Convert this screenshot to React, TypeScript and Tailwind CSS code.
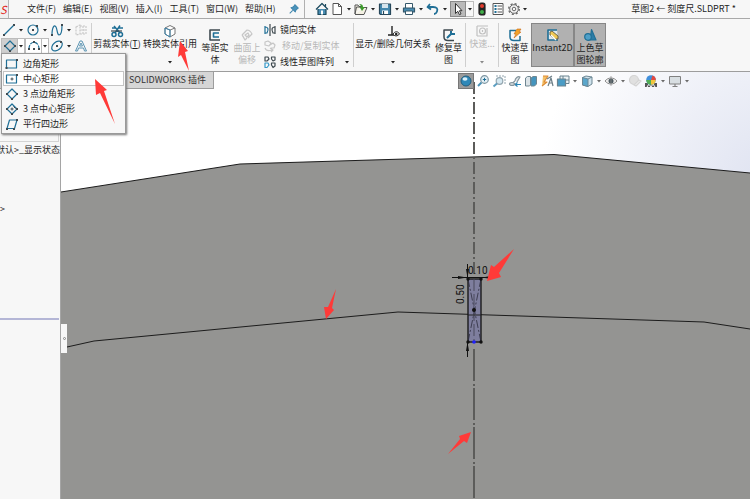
import type { ReactNode } from 'react';
import clsx from 'clsx';

const BLUE = '#1f6f96';
const INK = '#3f4a50';

interface IconProps {
  size?: string;
  box?: string;
  color?: string;
  children: ReactNode;
}

const Icon = ({ size = 'w-[14px] h-[14px]', box = '0 0 14 14', color = BLUE, children }: IconProps) => (
  <svg
    className={clsx('shrink-0', size)}
    viewBox={box}
    fill="none"
    stroke={color}
    strokeWidth="1.2"
    strokeLinejoin="round"
    aria-hidden="true"
  >
    {children}
  </svg>
);

const CaretMark = ({ color = '#222' }: { color?: string }) => (
  <svg className="w-1 h-[3px] shrink-0" viewBox="0 0 4 3" aria-hidden="true">
    <path d="M0 0h4L2 2.6z" fill={color} />
  </svg>
);

const Caret = ({ label, className = 'w-[10px]', color }: { label: string; className?: string; color?: string }) => (
  <button aria-label={label} className={clsx('flex h-full items-center justify-center', className)}>
    <CaretMark color={color} />
  </button>
);

/* ---------- sketch tool icons ---------- */

const dot = (x: number, y: number) => <rect x={x - 1} y={y - 1} width="2" height="2" fill={INK} stroke="none" />;

const LineIcon = () => (
  <Icon>
    <path d="M2 12L12 2" />
    {dot(2, 12)}
    {dot(12, 2)}
  </Icon>
);

const CircleIcon = () => (
  <Icon>
    <circle cx="7" cy="7" r="5" />
    {dot(7, 7)}
    {dot(11, 3)}
  </Icon>
);

const SplineIcon = () => (
  <Icon>
    <path d="M2 12C2 4 4.500 1 6 4s1 8 3 8 3-5 3-10" />
    {dot(2, 12)}
    {dot(12, 2)}
  </Icon>
);

const PlaneIcon = () => (
  <Icon color="#c9c9c9">
    <path d="M2 4l4-2v9l-4 1zM6 3h6v8H6M9 3v8M6 7h6" strokeDasharray="2 1" />
  </Icon>
);

const DiamondIcon = ({ center = false }: { center?: boolean }) => (
  <Icon>
    <path d="M7 2l5 5-5 5-5-5z" />
    {dot(2, 7)}
    {dot(7, 12)}
    {dot(12, 7)}
    {center && <path d="M7 5.500v3M5.500 7h3M8.500 4.500l2 2" stroke={INK} strokeWidth="1" />}
  </Icon>
);

const ArcIcon = () => (
  <Icon>
    <path d="M2 10C2 1 12 1 12 10" strokeDasharray="4 1" />
    {dot(2, 10)}
    {dot(12, 10)}
    {dot(7, 10)}
    {dot(7, 3)}
  </Icon>
);

const EllipseIcon = () => (
  <Icon>
    <ellipse cx="7" cy="7" rx="6" ry="4" transform="rotate(-40 7 7)" />
    {dot(7, 7)}
    {dot(11, 3)}
  </Icon>
);

const TextIcon = () => (
  <Icon color="#5c95b3">
    <path d="M1.500 12L6 2h2l4.500 10h-2L9.500 9h-5l-1 3zM5.500 7h3L7 4z" strokeWidth="1" />
  </Icon>
);

const CornerRectIcon = ({ center = false }: { center?: boolean }) => (
  <Icon>
    <rect x="1.500" y="3" width="10" height="8" />
    {!center && dot(1.5, 11)}
    {dot(12, 3)}
    {center && <path d="M7 5.500v3M5.500 7h3" stroke={INK} strokeWidth="1" />}
  </Icon>
);

const ParallelogramIcon = () => (
  <Icon>
    <path d="M4.500 3H12L9.500 11.500H2z" />
    {dot(12, 3)}
    {dot(2, 12)}
    {dot(9, 12)}
  </Icon>
);

/* ---------- title bar ---------- */

const menus = ['文件(F)', '编辑(E)', '视图(V)', '插入(I)', '工具(T)', '窗口(W)', '帮助(H)'];

const quickTools: { label: string; icon: ReactNode }[] = [
  {
    label: '新建',
    icon: (
      <Icon color="#555">
        <path d="M3 1.500h5.500l3 3v8H3z" fill="#fff" strokeWidth="1" />
        <path d="M8.500 1.500v3h3" strokeWidth="1" />
      </Icon>
    ),
  },
  {
    label: '打开',
    icon: (
      <Icon color="#555">
        <path d="M1 12V3h3l1 1.500h2M1 12l1.500-7H6M1 12.500h9l3-7h-3" fill="#f4f1e4" strokeWidth="1" />
        <path d="M5 2c3 0 4 1 4 3h2L8 9 5.500 5H7C7 4 6.500 3 5 2z" fill="#3c9a2b" stroke="none" />
      </Icon>
    ),
  },
  {
    label: '保存',
    icon: (
      <Icon color="#26475a">
        <path d="M1.500 2h11v10.500h-10l-1-1z" fill="#4688ad" />
        <path d="M4 2h6v4H4z" fill="#d7e5ed" stroke="none" />
        <path d="M4 8.500h6V12H4z" fill="#fff" stroke="none" />
        <path d="M5.500 9v3" />
      </Icon>
    ),
  },
  {
    label: '打印',
    icon: (
      <Icon color="#35586b">
        <path d="M3.500 6V1.500h7V6" fill="#fff" strokeWidth="1" />
        <rect x="1.500" y="6" width="11" height="4" fill="#4a8db2" />
        <path d="M3.500 9h7v3.500h-7z" fill="#fff" strokeWidth="1" />
      </Icon>
    ),
  },
  {
    label: '撤销',
    icon: (
      <Icon>
        <path d="M4 2L1.500 5 5 7.500M2 5h5c4 0 5 2 4 4.500S9 12 8 12" strokeWidth="1.800" />
      </Icon>
    ),
  },
];

const TitleBar = () => (
  <header className="flex h-[19px] items-center border-b border-[#a9a9a9] bg-[#f7f7f7]">
    <div className="flex h-full w-[9px] items-center border-r border-[#b5b5b5] bg-[#efefef] text-[11px] italic text-[#e2231a]">
      S
    </div>
    <nav className="flex h-full w-[295px] items-center pl-[18px] leading-3">
      {menus.map((m) => (
        <button key={m} className="mr-[7px] whitespace-nowrap">
          {m}
        </button>
      ))}
      <button aria-label="固定菜单" className="ml-auto mr-1">
        <Icon size="w-3 h-3">
          <path d="M8 2l4 4-1 .5-2 2-.5 2L3.500 5.500l2-.5 2-2zM5.500 8.500L2 12" fill="#4b93bb" stroke="#3f86ad" />
        </Icon>
      </button>
    </nav>
    <div className="flex h-full items-center border-l border-[#b0b0b0] pl-2">
      <button aria-label="主页" className="flex w-[17px] justify-center">
        <Icon color="#1c4a5f">
          <path d="M3 7v5.500h8V7" fill="#4a8db2" />
          <path d="M1 7.500l6-6 6 6M10.500 2v2.500" />
          <path d="M6 8.500h2v4H6z" fill="#fff" stroke="none" />
        </Icon>
      </button>
      {quickTools.map((t) => (
        <div key={t.label} className="flex h-full items-center">
          <button aria-label={t.label}>{t.icon}</button>
          <Caret label={`${t.label}选项`} />
        </div>
      ))}
      <button aria-label="选择" className="flex h-4 w-4 items-center justify-center border border-[#8a8a8a] bg-[#b9b9b9]">
        <Icon color="#333">
          <path d="M4.500 1.500v10l2.300-2.200 1.600 3.400 1.600-.8-1.600-3.200H11z" fill="#fff" strokeWidth="1" />
        </Icon>
      </button>
      <span className="flex h-4 w-2 border border-l-0 border-[#bdbdbd]">
        <Caret label="选择选项" className="w-full" />
      </span>
      <button aria-label="重建模型" className="flex w-4 justify-center">
        <Icon>
          <rect x="4" y="1" width="6" height="12" rx="2" fill="#222" stroke="#222" />
          <circle cx="7" cy="4" r="2" fill="#e23b2e" stroke="none" />
          <circle cx="7" cy="10" r="2" fill="#3fae49" stroke="none" />
        </Icon>
      </button>
      <button aria-label="文件属性" className="flex w-4 justify-center">
        <Icon color="#555">
          <rect x="2" y="1.500" width="10" height="11" fill="#fff" strokeWidth="1" />
          <path d="M6.500 4H11M6.500 7H11M6.500 10H11" strokeWidth="1" />
          <path d="M3.500 4h2M3.500 7h2M3.500 10h2" stroke={BLUE} strokeWidth="2" />
        </Icon>
      </button>
      <button aria-label="选项" className="flex w-4 justify-center">
        <Icon color="#666">
          <circle cx="7" cy="7" r="4.300" strokeWidth="1" />
          <circle cx="7" cy="7" r="5.300" strokeWidth="1.300" strokeDasharray="2.100 2.060" />
          <circle cx="7" cy="7" r="1.800" strokeWidth="1" />
        </Icon>
      </button>
      <Caret label="更多选项" className="w-[6px]" />
    </div>
    <h1 className="ml-auto whitespace-nowrap pr-[14px] leading-3">草图2 ← 刻度尺.SLDPRT *</h1>
  </header>
);

/* ---------- ribbon ---------- */

interface RibbonButtonProps {
  label: string;
  width: string;
  icon: ReactNode;
  lines?: ReactNode[];
  caret?: boolean;
  disabled?: boolean;
  active?: boolean;
}

const RibbonButton = ({ label, width, icon, lines, caret, disabled, active }: RibbonButtonProps) => {
  const low = !!lines && !caret;
  return (
    <button
      aria-label={label}
      disabled={disabled}
      className={clsx(
        'flex flex-col items-center whitespace-nowrap leading-3',
        width,
        active ? 'my-1 border border-[#878787] bg-[#b1b1b1] pt-1' : low ? 'pt-[9px]' : 'pt-[5px]',
        disabled && 'text-[#b8b8b8]'
      )}
    >
      {icon}
      {(lines ?? [label]).map((l, i) => (
        <span key={i}>{l}</span>
      ))}
      {caret && (
        <span className="mt-[11px]">
          <CaretMark color={disabled ? '#888' : '#222'} />
        </span>
      )}
    </button>
  );
};

const Divider = () => <div className="my-1 w-px bg-[#cfcfcf]" />;

const ToolPair = ({ label, boxed, children }: { label: string; boxed?: 'on' | 'open'; children: ReactNode }) => (
  <div
    className={clsx(
      'flex h-4 w-6 items-center',
      boxed && 'border border-[#bcbcbc] bg-white'
    )}
  >
    <button
      aria-label={label}
      className={clsx('flex h-full w-4 items-center justify-center', boxed === 'on' && 'bg-[#cfcfcf]', boxed && 'border-r border-[#bcbcbc]')}
    >
      {children}
    </button>
    <Caret label={`${label}选项`} className={boxed ? 'w-[6px]' : 'w-2'} />
  </div>
);

const Ribbon = () => (
  <section aria-label="草图" className="flex h-[53px] border-b border-[#9d9d9d] bg-[#f7f7f7]">
    <div className="flex w-[91px] flex-col pl-px pt-[3px]">
      <div className="flex">
        <ToolPair label="直线"><LineIcon /></ToolPair>
        <ToolPair label="圆"><CircleIcon /></ToolPair>
        <ToolPair label="样条曲线"><SplineIcon /></ToolPair>
        <button aria-label="基准面" disabled className="flex w-4 items-center justify-center"><PlaneIcon /></button>
      </div>
      <div className="flex">
        <ToolPair label="矩形" boxed="on"><DiamondIcon /></ToolPair>
        <ToolPair label="圆弧" boxed="open"><ArcIcon /></ToolPair>
        <ToolPair label="椭圆"><EllipseIcon /></ToolPair>
        <button aria-label="文字" className="flex w-4 items-center justify-center"><TextIcon /></button>
      </div>
    </div>
    <Divider />
    <RibbonButton
      label="剪裁实体(T)"
      lines={[<>剪裁实体(<u>T</u>)</>]}
      width="w-[50px] -mt-1"
      icon={
        <Icon>
          <path d="M2 4h3M9 4h4M4 2l6 7M10 1.500L5 9" strokeWidth="1.500" />
          <circle cx="4" cy="10.500" r="2" strokeWidth="1.500" />
          <circle cx="10.500" cy="10.500" r="2" strokeWidth="1.500" />
          <path d="M1 7h11" stroke={INK} />
        </Icon>
      }
    />
    <RibbonButton
      label="转换实体引用"
      width="w-[56px]"
      caret
      icon={
        <Icon color="#777">
          <path d="M2 4l5-2.500L12 4v6l-5 3-5-3z" fill="#fff" strokeWidth="1" />
          <path d="M2 4l5 2 5-2M7 6v7" strokeWidth="1" />
          <path d="M2 4l5 2v7l-5-3z" stroke="#3f86ad" strokeWidth="1" />
        </Icon>
      }
    />
    <RibbonButton
      label="等距实体"
      lines={['等距实', '体']}
      width="w-[34px]"
      icon={
        <Icon>
          <path d="M12 2H2v10h10" stroke={INK} strokeWidth="1.600" />
          <path d="M11 5H5.500v4H11" strokeWidth="1.600" />
        </Icon>
      }
    />
    <RibbonButton
      label="曲面上偏移"
      lines={['曲面上', '偏移']}
      width="w-[30px]"
      disabled
      icon={
        <Icon color="#c6c6c6">
          <path d="M2 7l5-5c2 0 4 2 5 4l-4 4M2 7c1 1 2 3 3 5l2-2M5 7l3-2 1 2-2 2z" />
        </Icon>
      }
    />
    <div className="flex w-[91px] flex-col pl-px pt-[3px]">
      <button className="flex h-4 items-center gap-[3px] whitespace-nowrap">
        <Icon>
          <path d="M2 3v8M2 4c3 0 4 2 2 6H2" />
          <path d="M7 1v12M12 3v8M12 4c-3 0-4 2-2 6h2" stroke={INK} />
        </Icon>
        镜向实体
      </button>
      <button disabled className="flex h-4 items-center gap-[3px] whitespace-nowrap text-[#b8b8b8]">
        <Icon color="#c6c6c6">
          <path d="M2 3l3-1 3 2-2 3-4-1zM7 6l3-2 2 2-1 3H8M2 9c1 3 4 3 7 2M7 9l3 2-2 2" />
        </Icon>
        <span className="pl-[2px]">移动/复制实体</span>
      </button>
      <div className="flex h-4 items-center">
        <button className="flex items-center gap-[3px] whitespace-nowrap">
          <Icon color={INK}>
            <path d="M2 2h3l1 2-2 2H2zM8.500 2H12v3l-2 1-1.500-2zM8.500 8H12v3l-2 1.500L8.500 10z" />
            <path d="M2 8h3l1 2-2 2.500H2z" stroke="#3498c8" />
          </Icon>
          线性草图阵列
        </button>
        <Caret label="阵列选项" className="ml-auto w-3" />
      </div>
    </div>
    <Divider />
    <RibbonButton
      label="显示/删除几何关系"
      width="w-[78px]"
      caret
      icon={
        <Icon color="#222">
          <path d="M6 2v9M2 11h8" strokeWidth="1.400" />
          <path d="M7 10c2-3 5-3 6.500 0-2 2.500-5 2.500-6.500 0z" fill="#fff" strokeWidth="1" />
          <circle cx="10.200" cy="10" r="1.300" fill="#222" stroke="none" />
        </Icon>
      }
    />
    <RibbonButton
      label="修复草图"
      lines={['修复草', '图']}
      width="w-[33px]"
      icon={
        <Icon color={INK}>
          <path d="M11 2H2v7c0 2 1 3.500 4 3.500h6" strokeWidth="1.500" />
          <path d="M5 10l4.500-4.500M9 3v3h4" stroke={BLUE} strokeWidth="2" />
        </Icon>
      }
    />
    <Divider />
    <RibbonButton
      label="快速..."
      width="w-8"
      caret
      disabled
      icon={
        <Icon color="#c0c0c0">
          <path d="M2 2h11M2 2v10M2 12h10V4" />
          <circle cx="7.500" cy="7" r="3" />
          <path d="M7.500 6v2" />
        </Icon>
      }
    />
    <Divider />
    <RibbonButton
      label="快速草图"
      lines={['快速草', '图']}
      width="w-8"
      icon={
        <Icon>
          <path d="M8 2.500H2V9c0 2 1 3.500 4 3.500h6V8" strokeWidth="1.500" />
          <path d="M9 1h4l-2 3h2L6 10l2-4H6z" fill="#f3a32a" stroke="#c76a17" strokeWidth=".6" />
        </Icon>
      }
    />
    <RibbonButton
      label="Instant2D"
      lines={['Instant2D']}
      width="w-[43px]"
      active
      icon={
        <Icon>
          <path d="M11 2H2v10h10" fill="#dfe9ee" strokeWidth="1.600" />
          <path d="M4 4l2-1 6 5v3H9L4 7z" fill="#f0c955" stroke="#514a33" strokeWidth=".8" />
          <path d="M5 7l5 5" stroke="#fff" />
        </Icon>
      }
    />
    <RibbonButton
      label="上色草图轮廓"
      lines={['上色草', '图轮廓']}
      width="w-8"
      active
      icon={
        <Icon>
          <path d="M8.500 1.500L13 12H7z" fill="#2c7ca6" />
          <circle cx="5" cy="9" r="3.300" fill="#4f9fc7" />
        </Icon>
      }
    />
  </section>
);

/* ---------- rectangle flyout ---------- */

const rectangleTools = [
  { label: '边角矩形', icon: <CornerRectIcon /> },
  { label: '中心矩形', icon: <CornerRectIcon center />, hover: true },
  { label: '3 点边角矩形', icon: <DiamondIcon /> },
  { label: '3 点中心矩形', icon: <DiamondIcon center /> },
  { label: '平行四边形', icon: <ParallelogramIcon /> },
];

const RectangleFlyout = () => (
  <ul className="absolute left-px top-[53px] z-10 w-[125px] border border-[#999] bg-[#f7f7f7] px-px py-[2px] shadow-[1px_1px_2px_#777]">
    {rectangleTools.map((t) => (
      <li key={t.label}>
        <button
          className={clsx(
            'flex h-[15px] w-full items-center gap-1 border pl-px leading-3',
            t.hover ? 'border-[#c4c4c4] bg-white' : 'border-transparent'
          )}
        >
          {t.icon}
          {t.label}
        </button>
      </li>
    ))}
  </ul>
);

/* ---------- heads-up view toolbar ---------- */

const viewTools: { label: string; icon: ReactNode; caret?: boolean }[] = [
  {
    label: '整屏显示全图',
    icon: (
      <Icon color="#7f96a1">
        <circle cx="8.500" cy="5.500" r="3.800" fill="#e4f0f6" />
        <path d="M5.500 8.500L2 12" stroke="#4a90b5" strokeWidth="2" />
        <path d="M8.500 3.800v3.400M6.800 5.500h3.400" stroke={BLUE} strokeWidth="1" />
      </Icon>
    ),
  },
  {
    label: '局部放大',
    icon: (
      <Icon color="#94a6af">
        <circle cx="7.500" cy="7" r="3.300" fill="#d5e8f1" />
        <path d="M5 9.500l-3.500 3" stroke="#5a9dc0" strokeWidth="2" />
        <path d="M4 2h9v9" strokeDasharray="2 1" strokeWidth="1" />
      </Icon>
    ),
  },
  {
    label: '上一视图',
    icon: (
      <Icon color="#84949c">
        <path d="M2 11l5-4M7 7c0-3 3-5 5-4L9 8" fill="#e0e5e8" />
        <path d="M13 10.500H8M9.500 8.500l-2.500 2 2.500 2" stroke="#2a84b4" />
        <ellipse cx="4" cy="10" rx="2.500" ry="1.500" fill="#ccd3d7" />
      </Icon>
    ),
  },
  {
    label: '剖面视图',
    icon: (
      <Icon color="#6f8691">
        <path d="M1.500 4l2-1.500h3V11l-1 1h-4z" fill="#dce4e8" strokeWidth="1" />
        <path d="M7 4l2-1.500h3.500V10l-2 2H7z" fill="#4595be" strokeWidth="1" />
      </Icon>
    ),
  },
  {
    label: '动态注解视图',
    icon: (
      <Icon color="#6d7f88">
        <path d="M3 2h5L4 8h3l-5 4" fill="#f3c067" stroke="#dd8c36" />
        <path d="M8 12l3-8 2 8M9 9h3M7 5l5-3" />
      </Icon>
    ),
  },
  {
    label: '视图定向',
    caret: true,
    icon: (
      <Icon color="#6b8490">
        <path d="M4 5V2h9v7.500h-3.500z" fill="#edf2f4" strokeWidth="1" />
        <path d="M1.500 5h8v7h-8z" fill="#4a9cc5" />
        <path d="M7 2v3M9.500 6H13" strokeWidth="1" />
      </Icon>
    ),
  },
  {
    label: '显示样式',
    caret: true,
    icon: (
      <Icon color="#6d8794">
        <path d="M2.500 3.500L6 2l6 1v7l-4 2.500-5.500-1.500z" fill="#cfe2ec" strokeWidth="1" />
        <path d="M2.500 3.500L8 5v7.500l-5.500-1.500z" fill="#5aa6cb" strokeWidth="1" />
        <path d="M8 5l4-2" strokeWidth="1" />
      </Icon>
    ),
  },
  {
    label: '隐藏/显示项目',
    caret: true,
    icon: (
      <Icon color="#8e8e8e">
        <path d="M1 7c3-4 9-4 12 0-3 4-9 4-12 0z" fill="#ececec" strokeWidth="1" />
        <circle cx="7" cy="7" r="2.500" fill="#4c5960" stroke="none" />
        <path d="M7 2v10" strokeWidth=".7" />
      </Icon>
    ),
  },
  {
    label: '编辑外观',
    icon: (
      <Icon color="#d4d4d4">
        <circle cx="6" cy="6" r="4.500" fill="#e0e0e0" />
        <path d="M8 12l5-5-2-1-5 5z" fill="#eee" />
      </Icon>
    ),
  },
  {
    label: '应用布景',
    caret: true,
    icon: (
      <Icon>
        <path d="M1 9h12v4H1z" fill="#555" stroke="none" />
        <path d="M3 13l2-3 2 3 2-3 2 3" stroke="#fff" strokeWidth="1" />
        <circle cx="7" cy="6" r="4.800" fill="#3f8fdc" stroke="none" />
        <path d="M7 6l1.500-4.600A4.800 4.800 0 0 1 11.800 6z" fill="#e7483c" stroke="none" />
        <path d="M7 6h4.800A4.800 4.800 0 0 1 7 10.800z" fill="#f2c53d" stroke="none" />
        <path d="M7 6v4.800A4.800 4.800 0 0 1 2.200 6z" fill="#52ae55" stroke="none" />
      </Icon>
    ),
  },
  {
    label: '视图设定',
    caret: true,
    icon: (
      <Icon color="#808080">
        <rect x="1.500" y="2.500" width="11" height="7.500" fill="#d8dee2" strokeWidth="1" />
        <path d="M7 10v2M4.500 12.500h5" />
      </Icon>
    ),
  },
];

const ViewToolbar = () => (
  <div className="absolute right-[59px] top-px flex h-4 items-center">
    <button aria-label="查看" className="mr-px flex h-4 w-4 items-center justify-center border border-[#777] bg-[#9b9b9b]">
      <Icon>
        <circle cx="7" cy="7" r="5" fill="#2f88b8" stroke="#225e7e" strokeWidth="1" />
        <ellipse cx="6" cy="5" rx="2.500" ry="1.800" fill="#d8eff9" stroke="none" />
      </Icon>
    </button>
    {viewTools.map((t) => (
      <div key={t.label} className="flex h-full items-center">
        <button aria-label={t.label} className="flex w-4 justify-center">
          {t.icon}
        </button>
        {t.caret && <Caret label={`${t.label}选项`} className="w-2" color="#6a6a6a" />}
      </div>
    ))}
  </div>
);

/* ---------- model view ---------- */

const ModelView = () => (
  <svg className="block w-full" viewBox="61 72 689 427" role="img" aria-label="模型视图">
    <defs>
      <radialGradient id="sky" gradientUnits="userSpaceOnUse" cx="780" cy="190" r="240">
        <stop offset="0" stopColor="#dde1f0" />
        <stop offset="1" stopColor="#ffffff" />
      </radialGradient>
    </defs>
    <rect x="61" y="72" width="689" height="427" fill="url(#sky)" />
    <path d="M61 192L240 164 554 154.500 750 173V499H61z" fill="#949492" />
    <g fill="none" stroke="#1c1c1c" strokeWidth="1">
      <path d="M61 192L240 164 554 154.500 750 173" />
      <path d="M67 347L94 341 398 312 704 322 750 329" />
    </g>
    <path d="M474 82V278" stroke="#5c5c5a" strokeWidth="2" strokeDasharray="12 3 2 3" />
    <path d="M474 349V499" stroke="#5c5c5a" strokeWidth="2" strokeDasharray="32 3 2 2" />

    {/* sketch rectangle with its construction diagonals */}
    <rect x="468" y="279" width="13" height="63" fill="#7e7e9e" stroke="#111" strokeWidth="1.300" />
    <path d="M468 279L481 342M481 279L468 342" stroke="#2c2c3c" strokeWidth=".8" strokeDasharray="8 2 2 2" />
    <path d="M474 279V342" stroke="#4a4a5c" strokeWidth="1" strokeDasharray="12 3" />
    <path d="M468 315h13" stroke="#222" strokeWidth="1" />
    <g fill="#111">
      <circle cx="468" cy="279" r="1.700" />
      <circle cx="481" cy="279" r="1.700" />
      <circle cx="468" cy="342" r="1.700" />
      <circle cx="481" cy="342" r="1.700" />
      <circle cx="474" cy="310" r="2" />
    </g>
    <circle cx="474" cy="342" r="1.800" fill="#2020ff" />

    {/* dimensions */}
    <path d="M452 277.500H497M467.500 264V278M467.500 342V357" stroke="#111" strokeWidth="1" />
    <path d="M467 277.500l-9-1.500v3zM482 277.500l9-1.500v3zM467.500 278l-1.500-9h3zM467.500 342l-1.500 9h3z" fill="#111" />
    <text x="468" y="274" className="text-[10px]" fontFamily="Roboto, sans-serif" fill="#111">
      0.10
    </text>
    <text transform="translate(464 304) rotate(-90)" className="text-[10px]" fontFamily="Roboto, sans-serif" fill="#111">
      0.50
    </text>

    {/* callout arrows */}
    <g fill="#ff3a38">
      <path d="M514 249L499 273 501 277 487 281 491 265 494 267z" />
      <path d="M336 289L332 308 334 310 326 319 324 307 328 307z" />
      <path d="M448 454L460 439 459 436 471 432 467 443 464 441z" />
    </g>
  </svg>
);

const FeaturePanel = () => (
  <aside className="flex w-[61px] shrink-0 flex-col overflow-hidden border-r border-[#a5a5a5] bg-[#f7f7f7] pt-[17px] leading-3">
    <div className="mr-px h-[53px] border-b border-r border-[#d4d4d4]" />
    <div className="mr-px h-[178px] border-b-2 border-[#b4b6d6] pt-[2px]">
      <p className="-ml-1 whitespace-nowrap">默认&gt;_显示状态</p>
      <p className="pt-[47px]">&gt;</p>
    </div>
  </aside>
);

export default function App() {
  return (
    <div className="relative min-h-screen overflow-hidden bg-white text-[9px] text-[#1e1e1e] [font-family:'Noto_Sans_CJK_SC','Noto_Sans',sans-serif]">
      <TitleBar />
      <Ribbon />
      <main className="relative flex">
        <FeaturePanel />
        <div className="relative min-w-0 flex-1">
          <ModelView />
          <ViewToolbar />
          <button
            aria-label="折叠面板"
            className="absolute left-0 top-[59%] flex h-[29px] w-[6px] items-center justify-center bg-[#f7f7f7]"
          >
            <span className="h-[3px] w-[3px] rounded-full border border-[#888]" />
          </button>
        </div>
        <button className="absolute left-0 top-0 flex h-[17px] w-[214px] items-center justify-end whitespace-nowrap border-b border-r border-[#9d9d9d] bg-[#d6d6d6] pr-[7px] text-[#333]">
          SOLIDWORKS 插件
        </button>
      </main>
      <RectangleFlyout />
      <svg className="absolute left-[94px] top-[40px] z-20 h-[85px] w-[98px]" viewBox="94 40 98 85" aria-hidden="true">
        <path d="M95 79L107 90 104 91 115 124 100 93 96 95zM180 41L188 51 185 52 189 71 181 55 178 57z" fill="#ff3a38" />
      </svg>
    </div>
  );
}
